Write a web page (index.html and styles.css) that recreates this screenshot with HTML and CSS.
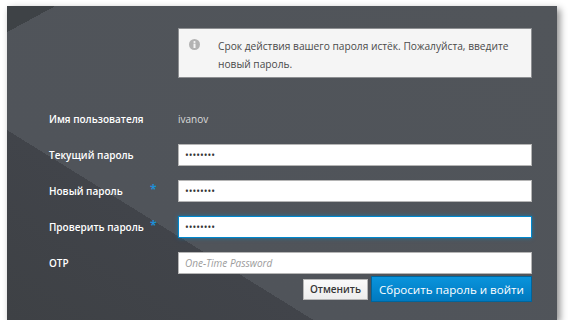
FILE: index.html
```html
<!DOCTYPE html>
<html lang="ru">
<head>
<meta charset="utf-8">
<link rel="stylesheet" href="styles.css">
</head>
<body>
<div class="panel">
  <div class="alert">
    <svg class="alert-icon" width="11" height="11" viewBox="0 0 11 11"><circle cx="5.5" cy="5.5" r="5.5" fill="#b3b3b3"/><circle cx="5.5" cy="3" r="1.1" fill="#f5f5f5"/><rect x="4.5" y="4.6" width="2" height="4.4" fill="#f5f5f5"/></svg>
    <span class="alert-text">Срок действия вашего пароля истёк. Пожалуйста, введите новый пароль.</span>
  </div>
  <form class="form">
    <div class="row">
      <label class="label">Имя пользователя</label>
      <span class="req"></span>
      <span class="value">ivanov</span>
    </div>
    <div class="row">
      <label class="label">Текущий пароль</label>
      <span class="req"></span>
      <input class="input" type="password" value="password">
    </div>
    <div class="row">
      <label class="label">Новый пароль</label>
      <span class="req">*</span>
      <input class="input" type="password" value="password">
    </div>
    <div class="row">
      <label class="label">Проверить пароль</label>
      <span class="req">*</span>
      <input class="input focus" type="password" value="password" autofocus>
    </div>
    <div class="row">
      <label class="label">OTP</label>
      <span class="req"></span>
      <input class="input" type="text" placeholder="One-Time Password">
    </div>
    <div class="buttons">
      <button type="button" class="btn btn-default">Отменить</button>
      <button type="button" class="btn btn-primary">Сбросить пароль и войти</button>
    </div>
  </form>
</div>
</body>
</html>
```

FILE: styles.css
```css
html, body {
  margin: 0;
  padding: 0;
  background: #ffffff;
}
body {
  padding: 6px 0 0 7px;
  font-family: "Open Sans", "Noto Sans", sans-serif;
}
.panel {
  width: 550px;
  height: 314px;
  box-sizing: border-box;
  padding: 22px 25px 0 42px;
  background:
    linear-gradient(151.6deg, #3e4246 0, #3e4246 23px, rgba(0,0,0,0) 23px),
    linear-gradient(31.8deg, #3e4145 0, #41444a 29%, #50545a 29%, #51555a 100%);
  box-shadow: 3px 3px 7px rgba(0, 0, 0, 0.45);
}
.alert {
  margin-left: 129px;
  height: 50px;
  box-sizing: border-box;
  border: 1px solid #8d8f92;
  background: #f5f5f5;
  display: flex;
  align-items: flex-start;
  gap: 18px;
  padding: 8px 10px 0 10px;
  color: #4a4a4a;
  font-size: 10.2px;
  line-height: 18px;
}
.alert-icon {
  flex: none;
  margin-top: 2px;
}
.form {
  margin-top: 30px;
  display: flex;
  flex-direction: column;
  gap: 14px;
}
.row {
  display: grid;
  grid-template-columns: 101px 28px 1fr;
  align-items: center;
  height: 22px;
}
.label {
  color: #ffffff;
  font-size: 10px;
  font-weight: 600;
  white-space: nowrap;
}
.req {
  color: #1e8fd6;
  font-size: 12px;
  font-weight: 700;
  line-height: 1;
  margin-top: -3px;
}
.value {
  color: #dcdcdc;
  font-size: 10px;
}
.input {
  height: 22px;
  box-sizing: border-box;
  margin: 0;
  border: 1px solid #b5b5b5;
  background: #ffffff;
  padding: 0 6px;
  font-family: "Open Sans", sans-serif;
  font-size: 10px;
  color: #333;
  outline: none;
  width: 100%;
}
.input::placeholder {
  color: #9c9c9c;
  font-style: italic;
}
.input.focus {
  border-color: #0088ce;
  box-shadow: 0 0 4px rgba(0, 136, 206, 0.7);
}
.buttons {
  margin-top: -12px;
  display: flex;
  justify-content: flex-end;
  align-items: center;
  gap: 3px;
}
.btn {
  font-family: "Open Sans", sans-serif;
  margin: 0;
  cursor: pointer;
  white-space: nowrap;
}
.btn-default {
  height: 21px;
  padding: 0 6px;
  border: 1px solid #b7b7b7;
  background: linear-gradient(#fafafa, #ededed);
  color: #363636;
  font-size: 10px;
  font-weight: 600;
}
.btn-primary {
  height: 26px;
  width: 161px;
  padding: 0 4px;
  border: 1px solid #00659c;
  background: linear-gradient(#0a94dc, #0079bf);
  color: #ffffff;
  font-size: 11.6px;
  font-weight: 500;
}
```
